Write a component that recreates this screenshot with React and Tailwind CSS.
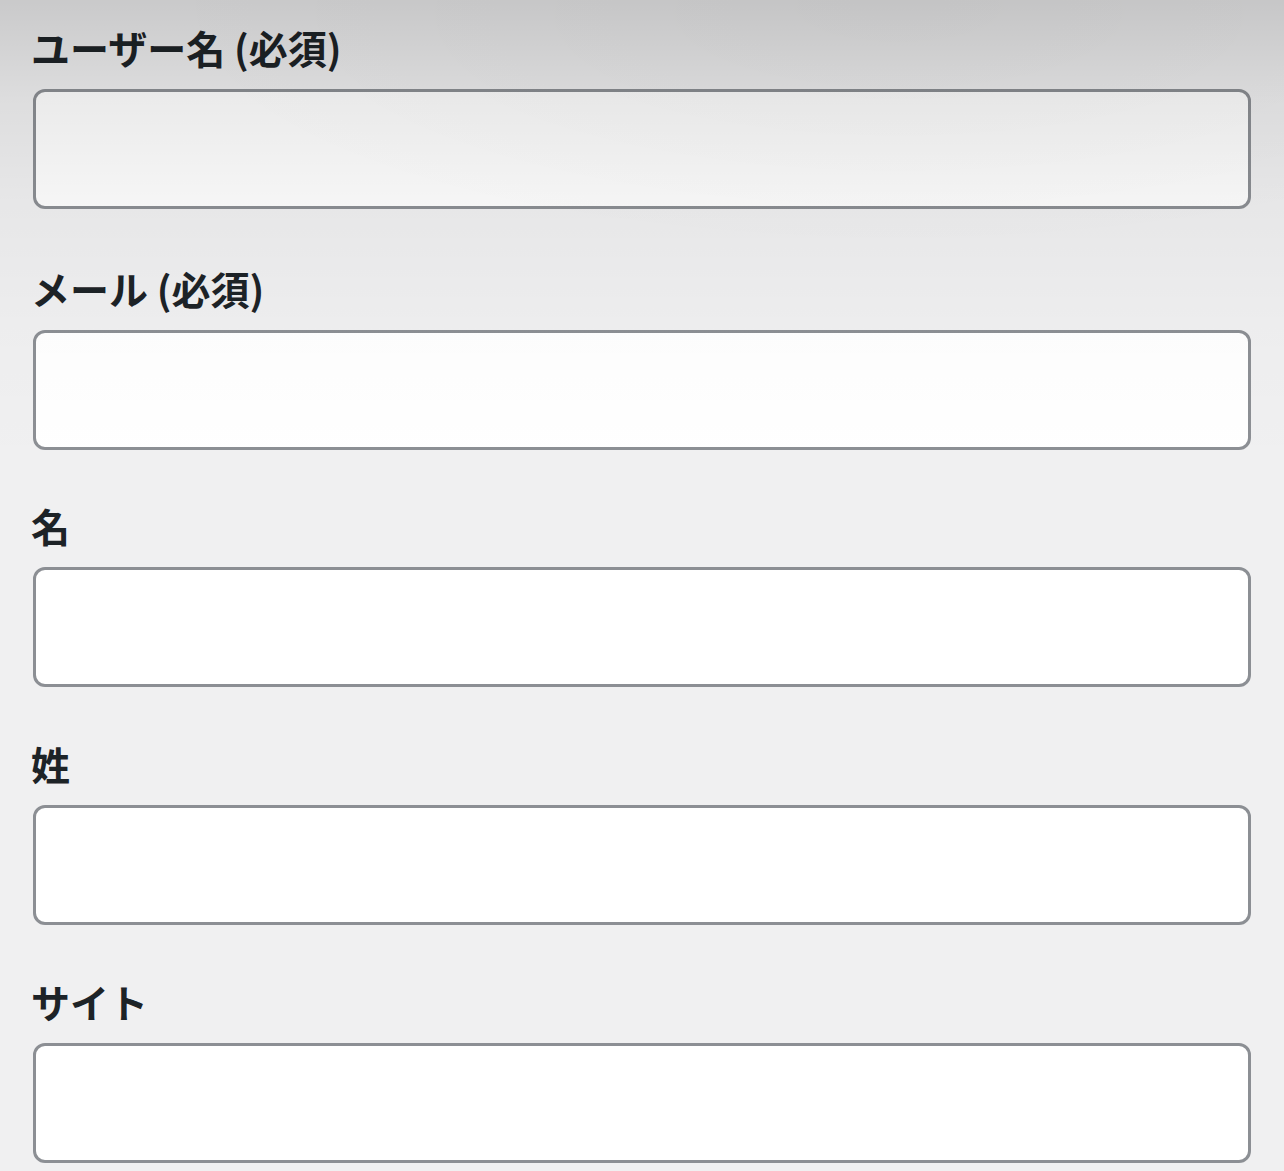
// Comment form fields (profile section), with the soft shadow that falls over the top.

const fields = [
  { id: "user_login", label: "ユーザー名 (必須)", gap: "mb-[54px]" },
  { id: "email", label: "メール (必須)", gap: "mb-[50px]" },
  { id: "first_name", label: "名", gap: "mb-[51px]" },
  { id: "last_name", label: "姓", gap: "mb-[51px]" },
  { id: "url", label: "サイト", gap: "mb-[51px]" },
];

function Field({ id, label, gap }) {
  return (
    <div className={gap}>
      <label
        htmlFor={id}
        className="-ml-[2px] block text-[39px] font-bold leading-[50px] text-[#1d2327]"
      >
        {label}
      </label>
      <input
        id={id}
        type="text"
        className="mt-[17px] block h-[120px] w-full rounded-[12px] border-[3px] border-[#8c8f94] bg-white px-4 text-[39px] text-[#2c3338] outline-none"
      />
    </div>
  );
}

export default function App() {
  return (
    <div
      className="relative min-h-[1171px] overflow-hidden bg-[#f0f0f1] px-[33px] pt-[22px]"
      style={{ fontFamily: '"Noto Sans CJK JP", "Noto Sans", sans-serif' }}
    >
      {fields.map((f) => (
        <Field key={f.id} {...f} />
      ))}
      <div className="pointer-events-none absolute inset-x-0 top-0 h-[480px] bg-[linear-gradient(to_bottom,rgba(0,0,0,0.16)_0px,rgba(0,0,0,0.08)_100px,rgba(0,0,0,0.04)_200px,rgba(0,0,0,0.01)_330px,rgba(0,0,0,0)_470px)]" />
      <div className="pointer-events-none absolute inset-x-0 top-0 h-[300px] bg-[radial-gradient(ellipse_at_70%_0%,rgba(0,0,0,0.03),rgba(0,0,0,0)_60%)]" />
    </div>
  );
}
